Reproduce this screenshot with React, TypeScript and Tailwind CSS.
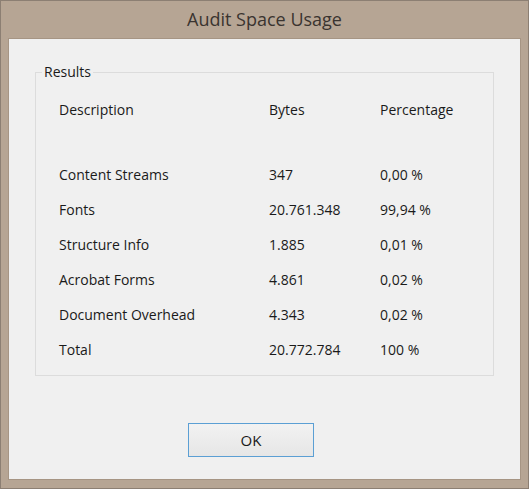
const rows = [
  { label: 'Content Streams', bytes: '347', pct: '0,00 %' },
  { label: 'Fonts', bytes: '20.761.348', pct: '99,94 %' },
  { label: 'Structure Info', bytes: '1.885', pct: '0,01 %' },
  { label: 'Acrobat Forms', bytes: '4.861', pct: '0,02 %' },
  { label: 'Document Overhead', bytes: '4.343', pct: '0,02 %' },
  { label: 'Total', bytes: '20.772.784', pct: '100 %' },
];

function Row({ label, bytes, pct }: { label: string; bytes: string; pct: string }) {
  return (
    <div className="flex h-[35px] items-center">
      <span className="w-[210px]">{label}</span>
      <span className="w-[111px]">{bytes}</span>
      <span>{pct}</span>
    </div>
  );
}

export default function App() {
  return (
    <div
      className="w-[529px] h-[489px] bg-[#b6a594] border border-[#8c7f73] text-[#1a1a1a] text-[14px]"
      style={{ fontFamily: '"Open Sans", "Noto Sans", sans-serif' }}
    >
      {/* title bar */}
      <div className="h-[37px] flex items-center justify-center text-[18px] text-[#3a3430] pb-[1px]">
        Audit Space Usage
      </div>

      {/* client area */}
      <div className="mx-[7px] h-[442px] bg-[#f0f0f0] border border-[#a69584] pt-[33px] px-[26px]">
        <fieldset className="relative h-[304px] border border-[#dcdcdc] pl-[23px] pt-[20px]">
          <span className="absolute -top-[11px] left-[6px] bg-[#f0f0f0] px-[2px] leading-[20px]">Results</span>
          <div className="flex h-[32px] items-center">
            <span className="w-[210px]">Description</span>
            <span className="w-[111px]">Bytes</span>
            <span>Percentage</span>
          </div>
          <div className="h-[32px]" />
          {rows.map((r) => (
            <Row key={r.label} {...r} />
          ))}
        </fieldset>

        <div className="flex pt-[47px] pl-[153px]">
          <button className="w-[126px] h-[34px] border border-[#5b9fd4] bg-gradient-to-b from-[#f2f2f2] to-[#e6e6e6] text-[#1a1a1a] text-[15px]">
            OK
          </button>
        </div>
      </div>
    </div>
  );
}
